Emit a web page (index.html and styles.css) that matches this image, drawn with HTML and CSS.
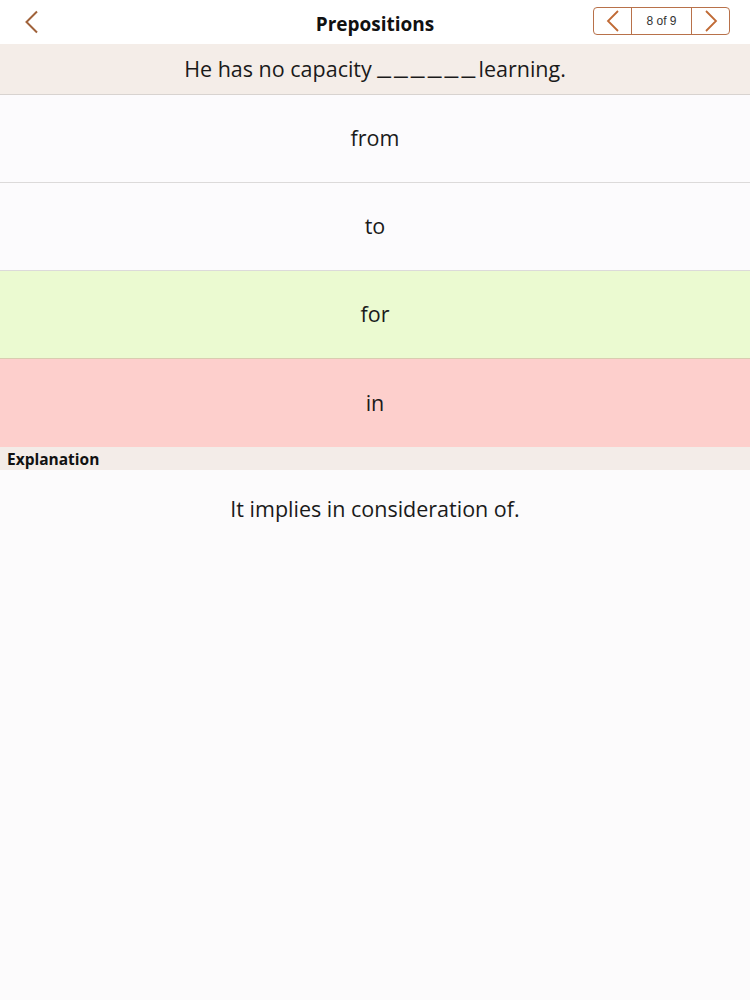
FILE: index.html
```html
<!DOCTYPE html>
<html>
<head>
<meta charset="utf-8">
<link rel="stylesheet" href="styles.css">
</head>
<body>
<header class="nav">
  <button class="back" aria-label="Back">
    <svg width="16" height="24" viewBox="0 0 16 24"><path d="M13 1.5 L2.5 12 L13 22.5" fill="none" stroke="#a0623a" stroke-width="2"/></svg>
  </button>
  <h1 class="title">Prepositions</h1>
  <div class="pager">
    <span class="seg arrow">
      <svg width="14" height="22" viewBox="0 0 14 22"><path d="M12 1 L2 11 L12 21" fill="none" stroke="#c06a35" stroke-width="1.8"/></svg>
    </span>
    <span class="seg count">8 of 9</span>
    <span class="seg arrow">
      <svg width="14" height="22" viewBox="0 0 14 22"><path d="M2 1 L12 11 L2 21" fill="none" stroke="#c06a35" stroke-width="1.8"/></svg>
    </span>
  </div>
</header>
<div class="question">He has no capacity <span class="blank">______</span>learning.</div>
<ul class="options">
  <li class="option">from</li>
  <li class="option">to</li>
  <li class="option correct">for</li>
  <li class="option wrong">in</li>
</ul>
<div class="section-head">Explanation</div>
<p class="explanation">It implies in consideration of.</p>
</body>
</html>
```
FILE: styles.css
```css
html, body {
  margin: 0;
  padding: 0;
  background: #fcfbfc;
  font-family: "Open Sans", "Liberation Sans", sans-serif;
  color: #1a1a1a;
}
.nav {
  height: 44px;
  background: #ffffff;
  display: flex;
  align-items: center;
  justify-content: center;
  position: relative;
}
.back {
  position: absolute;
  left: 24px;
  top: 9px;
  border: 0;
  background: none;
  padding: 0;
  width: 18px;
  height: 26px;
  display: flex;
  align-items: center;
}
.title {
  margin: 0;
  font-size: 19px;
  font-weight: 700;
  color: #111;
  padding-top: 3px;
}
.pager {
  position: absolute;
  right: 20px;
  top: 7px;
  height: 26px;
  display: flex;
  border: 1px solid #b8714a;
  border-radius: 4px;
  background: #fff;
}
.seg {
  display: flex;
  align-items: center;
  justify-content: center;
}
.arrow {
  width: 37px;
}
.count {
  width: 59px;
  border-left: 1px solid #b8714a;
  border-right: 1px solid #b8714a;
  font-family: "Liberation Sans", Arial, sans-serif;
  font-size: 12px;
  color: #333;
}
.question {
  height: 51px;
  box-sizing: border-box;
  background: #f4ede8;
  border-bottom: 1px solid #d8d3d0;
  display: flex;
  align-items: center;
  justify-content: center;
  font-size: 21.5px;
  padding-bottom: 2px;
  white-space: pre;
}
.blank {
  font-family: "Liberation Sans", Arial, sans-serif;
  font-size: 24px;
  letter-spacing: 3.5px;
  position: relative;
  top: -3px;
}
.options {
  list-style: none;
  margin: 0;
  padding: 0;
}
.option {
  height: 88px;
  box-sizing: border-box;
  border-bottom: 1px solid #dcdada;
  background: #fcfbfd;
  display: flex;
  align-items: center;
  justify-content: center;
  font-size: 21.5px;
  padding-bottom: 2px;
}
.option.correct {
  background: #ebfad1;
  border-bottom-color: #d9ccb0;
}
.option.wrong {
  background: #fdcfcc;
  border-bottom: 0;
}
.section-head {
  height: 23px;
  background: #f3ece8;
  font-size: 15.5px;
  font-weight: 700;
  padding-left: 7px;
  display: flex;
  align-items: center;
  color: #111;
}
.explanation {
  margin: 24px 0 0;
  text-align: center;
  font-size: 21.5px;
}
```
